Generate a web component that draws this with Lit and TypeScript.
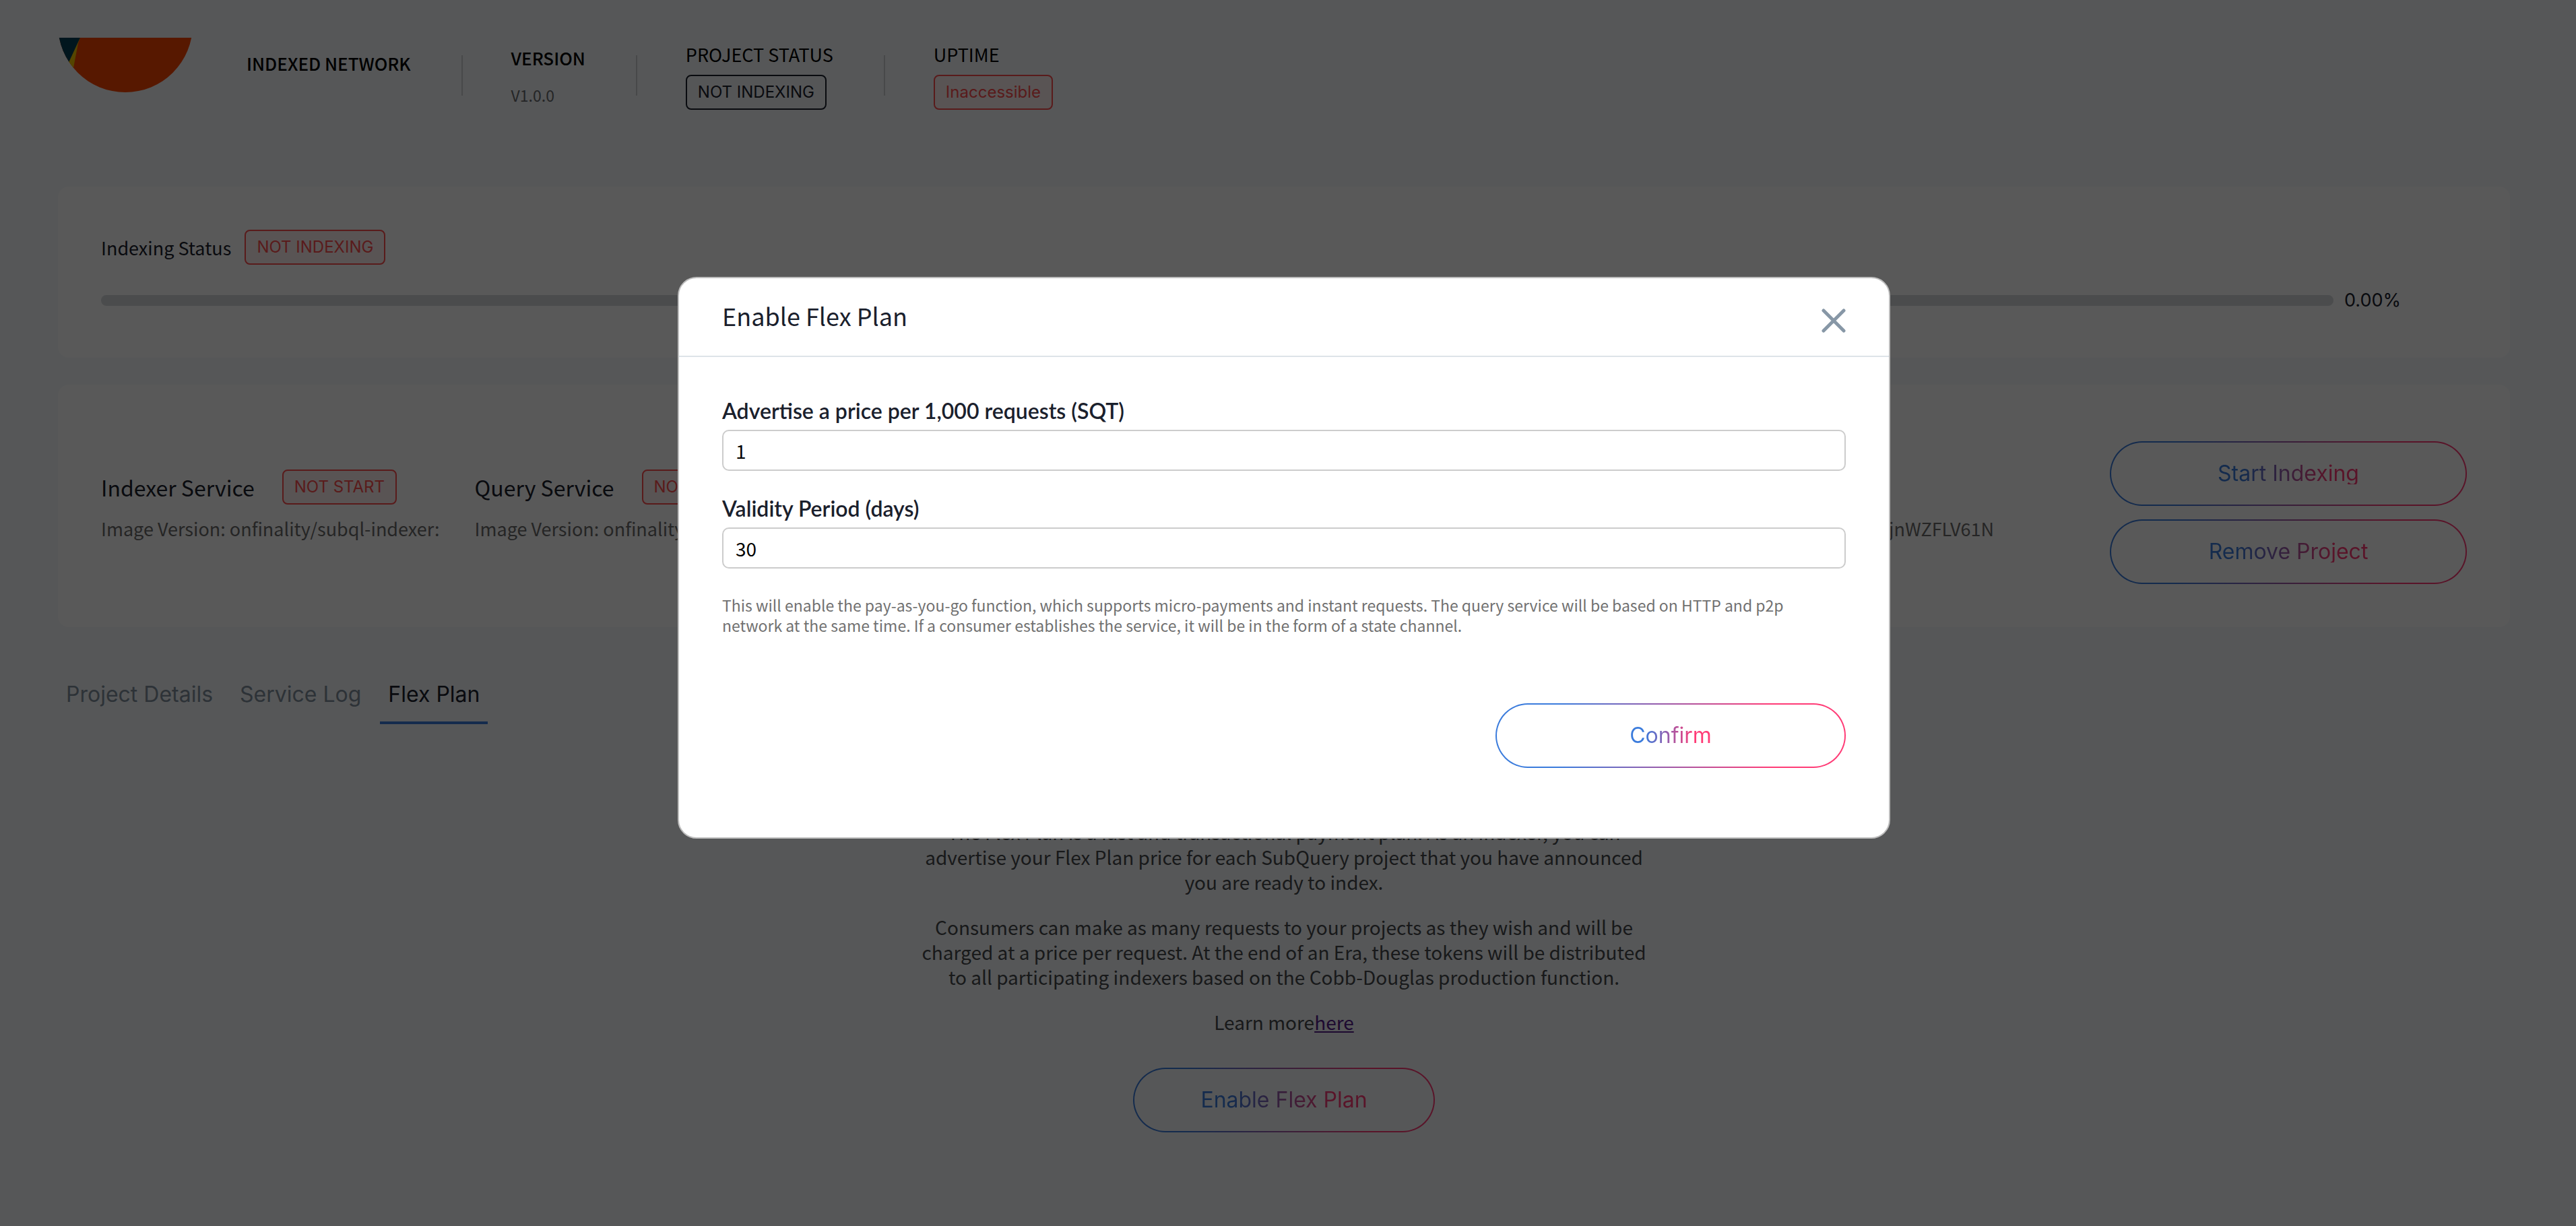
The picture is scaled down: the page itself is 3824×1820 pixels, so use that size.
import { LitElement, html, css } from "lit";
import { customElement, property } from "lit/decorators.js";

const shared = css`
  * {
    box-sizing: border-box;
  }
  h1,
  h2,
  p {
    margin: 0;
    font-weight: 400;
  }
`;

@customElement("status-tag")
export class StatusTag extends LitElement {
  @property() tone = "error";

  static styles = css`
    :host {
      display: inline-flex;
    }
    .tag {
      box-sizing: border-box;
      padding: 0 16px;
      border: 2px solid #ff4d4f;
      border-radius: 8px;
      background: #fff1f0;
      color: #ff4d4f;
      font: 400 24px/48px Inter, sans-serif;
      white-space: nowrap;
    }
    .tag.neutral {
      border-color: #1a202c;
      background: #f3f5f8;
      color: #1a202c;
    }
  `;

  render() {
    return html`<span class="tag ${this.tone}"><slot></slot></span>`;
  }
}

@customElement("gradient-button")
export class GradientButton extends LitElement {
  @property() surface = "card";

  static styles = css`
    :host {
      display: block;
    }
    button {
      box-sizing: border-box;
      display: flex;
      align-items: center;
      justify-content: center;
      width: 100%;
      height: 96px;
      padding: 0 98px;
      border: 2px solid transparent;
      border-radius: 48px;
      background:
        linear-gradient(#fff, #fff) padding-box,
        linear-gradient(90deg, #3a7bdc 18%, #ff3b76 79%) border-box;
      cursor: pointer;
    }
    button.page {
      background:
        linear-gradient(#f6f9fc, #f6f9fc) padding-box,
        linear-gradient(90deg, #3a7bdc 18%, #ff3b76 79%) border-box;
    }
    .label {
      background: linear-gradient(90deg, #3a7bdc 18%, #ff3b76 79%);
      -webkit-background-clip: text;
      background-clip: text;
      color: transparent;
      font: 400 32px/32px Inter, sans-serif;
      white-space: nowrap;
    }
  `;

  render() {
    return html`<button type="button" class=${this.surface}>
      <span class="label"><slot></slot></span>
    </button>`;
  }
}

@customElement("project-header")
export class ProjectHeader extends LitElement {
  static styles = [
    shared,
    css`
      :host {
        display: block;
      }
      .header {
        display: flex;
        align-items: center;
        height: 112px;
        color: #000;
      }
      .logo {
        align-self: flex-start;
        flex: none;
        width: 200px;
        height: 82px;
        margin-right: 80px;
      }
      .item {
        display: flex;
        flex-direction: column;
        align-items: flex-start;
        font-size: 27px;
        line-height: 40px;
        white-space: nowrap;
      }
      .name {
        padding-bottom: 36px;
      }
      .version {
        gap: 18px;
      }
      .strong {
        font-size: 26px;
        font-weight: 500;
      }
      .status {
        gap: 10px;
      }
      .small {
        color: #696b6e;
        font-size: 23px;
        line-height: 34px;
      }
      .divider {
        flex: none;
        width: 2px;
        height: 60px;
        margin: 0 72px 0 75px;
        background: #cdd0d3;
      }
    `,
  ];

  render() {
    return html`<header class="header">
      <svg class="logo" viewBox="0 0 200 82" aria-hidden="true">
        <defs>
          <clipPath id="disc"><circle cx="100" cy="-19" r="100" /></clipPath>
        </defs>
        <g clip-path="url(#disc)">
          <rect width="200" height="82" fill="#fa4500" />
          <polygon points="33,0 31,0 15,38 22,50 30,8" fill="#f2c602" />
          <polygon points="0,0 33,0 13,43 0,43" fill="#034058" />
        </g>
      </svg>
      <div class="item name"><span class="strong">INDEXED NETWORK</span></div>
      <div class="divider"></div>
      <div class="item version">
        <span class="strong">VERSION</span>
        <span class="small">V1.0.0</span>
      </div>
      <div class="divider"></div>
      <div class="item status">
        <span>PROJECT STATUS</span>
        <status-tag tone="neutral">NOT INDEXING</status-tag>
      </div>
      <div class="divider"></div>
      <div class="item status">
        <span>UPTIME</span>
        <status-tag>Inaccessible</status-tag>
      </div>
    </header>`;
  }
}

@customElement("flex-plan-dialog")
export class FlexPlanDialog extends LitElement {
  static styles = [
    shared,
    css`
      :host {
        position: fixed;
        inset: 0;
        display: flex;
        align-items: flex-start;
        justify-content: center;
        padding: 411px 12px 0 0;
        background: rgba(0, 0, 0, 0.65);
      }
      .dialog {
        box-sizing: border-box;
        width: 1800px;
        max-width: 100%;
        border: 2px solid #bdbdbd;
        border-radius: 28px;
        background: #fff;
        color: #1a202c;
      }
      .head {
        display: flex;
        align-items: flex-end;
        justify-content: space-between;
        padding: 29px 64px 34px;
        border-bottom: 2px solid #dde3e8;
      }
      .title {
        font-size: 36px;
        line-height: 52px;
      }
      .close {
        display: flex;
        padding: 0;
        border: 0;
        background: none;
        cursor: pointer;
      }
      .close svg {
        width: 36px;
        height: 36px;
      }
      .body {
        display: flex;
        flex-direction: column;
        padding: 60px 64px 103px;
      }
      .field {
        display: flex;
        flex-direction: column;
        gap: 8px;
        margin-bottom: 36px;
      }
      label {
        font: 600 32px/40px Lato, sans-serif;
      }
      input {
        width: 100%;
        height: 61px;
        padding: 0 18px;
        border: 2px solid #ccc;
        border-radius: 10px;
        outline: none;
        background: #fff;
        color: #000;
        font: inherit;
        font-size: 28px;
      }
      .note {
        margin-top: 3px;
        color: #717171;
        font-size: 23px;
        line-height: 30px;
      }
      .confirm {
        align-self: flex-end;
        width: 520px;
        margin-top: 101px;
      }
    `,
  ];

  render() {
    return html`<section class="dialog" role="dialog" aria-labelledby="title">
      <div class="head">
        <h2 class="title" id="title">Enable Flex Plan</h2>
        <button class="close" type="button" aria-label="Close">
          <svg viewBox="0 0 36 36" aria-hidden="true">
            <path d="M3 3 33 33M33 3 3 33" fill="none" stroke="#8797a6" stroke-width="5" stroke-linecap="round" />
          </svg>
        </button>
      </div>
      <form class="body">
        <div class="field">
          <label for="price">Advertise a price per 1,000 requests (SQT)</label>
          <input id="price" type="text" inputmode="decimal" value="1" />
        </div>
        <div class="field">
          <label for="period">Validity Period (days)</label>
          <input id="period" type="text" inputmode="numeric" value="30" />
        </div>
        <p class="note">
          This will enable the pay-as-you-go function, which supports micro-payments and instant requests. The query
          service will be based on HTTP and p2p network at the same time. If a consumer establishes the service, it will
          be in the form of a state channel.
        </p>
        <gradient-button class="confirm">Confirm</gradient-button>
      </form>
    </section>`;
  }
}

@customElement("app-root")
export class AppRoot extends LitElement {
  private services = [
    { name: "Indexer Service", image: "onfinality/subql-indexer:" },
    { name: "Query Service", image: "onfinality/subql-query:" },
  ];

  static styles = [
    shared,
    css`
      :host {
        display: block;
        min-height: 100vh;
        background: #f6f9fc;
        color: #1a202c;
        font-family: "Noto Sans CJK SC", "Noto Sans", sans-serif;
      }
      .page {
        display: flex;
        flex-direction: column;
        padding: 56px 98px 80px 86px;
      }
      .card {
        margin-bottom: 40px;
        padding: 64px;
        border-radius: 16px;
        background: #fff;
      }
      .first {
        margin-top: 109px;
      }
      .row {
        display: flex;
        align-items: center;
        height: 52px;
      }
      .status {
        gap: 20px;
        font-size: 27px;
      }
      .progress {
        display: flex;
        align-items: center;
        gap: 16px;
        margin-top: 32px;
        font: 400 27px/42px Inter, sans-serif;
      }
      .track {
        flex: 1;
        height: 16px;
        border-radius: 8px;
        background: #d6d9dc;
      }
      .percent {
        width: 182px;
      }
      .services {
        display: flex;
        align-items: center;
        gap: 52px;
      }
      .service {
        display: flex;
        flex-direction: column;
        gap: 16px;
        white-space: nowrap;
      }
      .service .row {
        gap: 41px;
      }
      .service h2 {
        font-size: 32px;
        font-weight: 400;
      }
      .detail {
        color: #6b6b6b;
        font-size: 27px;
        line-height: 40px;
      }
      .deployment {
        align-self: flex-end;
        margin: 0 120px 62px auto;
      }
      .actions {
        display: flex;
        flex-direction: column;
        gap: 20px;
        width: 530px;
        padding-top: 20px;
      }
      .tabs {
        display: flex;
        gap: 16px;
        margin-top: 40px;
      }
      .tab {
        padding: 0 12px 20px;
        border: 0;
        border-bottom: 4px solid transparent;
        background: none;
        color: #82919e;
        font: 400 32px/40px Inter, sans-serif;
        cursor: pointer;
      }
      .tab.active {
        border-color: #3a7bdc;
        color: #1a202c;
      }
      .plan {
        display: flex;
        flex-direction: column;
        align-items: center;
        gap: 30px;
        padding-top: 142px;
        color: #46494c;
        font-size: 28px;
        line-height: 37px;
        text-align: center;
      }
      .plan p {
        max-width: 1096px;
      }
      .plan a {
        color: #551a8b;
      }
      .enable {
        margin-top: 19px;
      }
    `,
  ];

  render() {
    return html`
      <main class="page">
        <project-header></project-header>

        <section class="card first">
          <div class="row status">
            <span>Indexing Status</span>
            <status-tag>NOT INDEXING</status-tag>
          </div>
          <div class="progress">
            <div class="track" role="progressbar" aria-label="Indexing progress" aria-valuenow="0"></div>
            <span class="percent">0.00%</span>
          </div>
        </section>

        <section class="card services">
          ${this.services.map(
            (s) => html`<div class="service">
              <div class="row">
                <h2>${s.name}</h2>
                <status-tag>NOT START</status-tag>
              </div>
              <span class="detail">Image Version: ${s.image}</span>
            </div>`,
          )}
          <span class="detail deployment">jnWZFLV61N</span>
          <div class="actions">
            <gradient-button>Start Indexing</gradient-button>
            <gradient-button>Remove Project</gradient-button>
          </div>
        </section>

        <nav class="tabs" role="tablist">
          <button class="tab" role="tab" type="button">Project Details</button>
          <button class="tab" role="tab" type="button">Service Log</button>
          <button class="tab active" role="tab" type="button" aria-selected="true">Flex Plan</button>
        </nav>

        <section class="plan">
          <p>
            The Flex Plan is a fast and transactional payment plan. As an indexer, you can advertise your Flex Plan
            price for each SubQuery project that you have announced you are ready to index.
          </p>
          <p>
            Consumers can make as many requests to your projects as they wish and will be charged at a price per
            request. At the end of an Era, these tokens will be distributed to all participating indexers based on the
            Cobb-Douglas production function.
          </p>
          <p>Learn more<a href="#flex-plan">here</a></p>
          <gradient-button class="enable" surface="page">Enable Flex Plan</gradient-button>
        </section>
      </main>
      <flex-plan-dialog></flex-plan-dialog>
    `;
  }
}
